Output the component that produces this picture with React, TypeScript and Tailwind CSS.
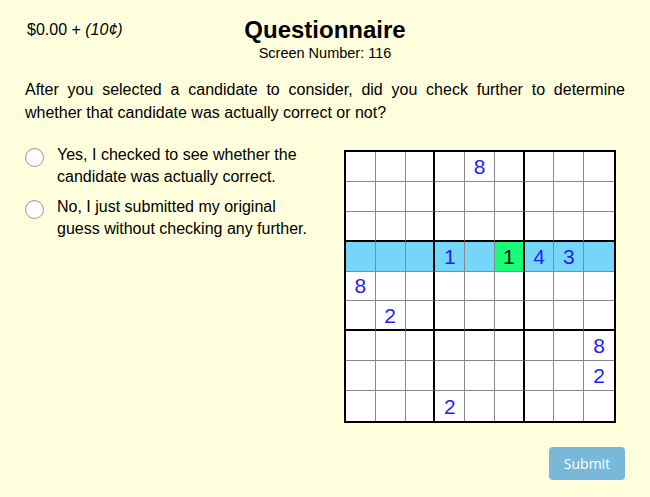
import React from "react";

const grid: (number | null)[][] = [
  [null, null, null, null, 8, null, null, null, null],
  [null, null, null, null, null, null, null, null, null],
  [null, null, null, null, null, null, null, null, null],
  [null, null, null, 1, null, 1, 4, 3, null],
  [8, null, null, null, null, null, null, null, null],
  [null, 2, null, null, null, null, null, null, null],
  [null, null, null, null, null, null, null, null, 8],
  [null, null, null, null, null, null, null, null, 2],
  [null, null, null, 2, null, null, null, null, null],
];

function Cell({ r, c, v }: { r: number; c: number; v: number | null }) {
  const highlight = r === 3;
  const selected = r === 3 && c === 5;
  const right = c === 2 || c === 5 ? "border-r-2 border-r-black" : c === 8 ? "" : "border-r border-r-[#888]";
  const bottom = r === 2 || r === 5 ? "border-b-2 border-b-black" : r === 8 ? "" : "border-b border-b-[#888]";
  const bg = selected ? "bg-[#17fd78]" : highlight ? "bg-[#76d6f9]" : "bg-white";
  return (
    <div
      className={`flex items-center justify-center text-[21px] leading-none ${right} ${bottom} ${bg} ${
        selected ? "text-black" : "text-[#1e1eff]"
      }`}
    >
      {v ?? ""}
    </div>
  );
}

function Radio({ children }: { children: React.ReactNode }) {
  return (
    <label className="flex items-start gap-[13px]">
      <span className="mt-[4px] w-[19px] h-[19px] shrink-0 rounded-full border border-[#9a9a9a] bg-white shadow-[inset_0_1px_1px_rgba(0,0,0,0.08)]" />
      <span className="text-[16px] leading-[22px] text-black">{children}</span>
    </label>
  );
}

export default function App() {
  return (
    <main
      className="w-[650px] h-[497px] bg-[#ffffdd] px-[25px] pt-[17px] text-black"
      style={{ fontFamily: '"Liberation Sans", Arial, sans-serif' }}
    >
      {/* Header */}
      <div className="grid grid-cols-[1fr_auto_1fr] items-start">
        <p className="text-[16px] leading-[22px] pt-[2px] pl-[2px]">
          $0.00 + <i>(10¢)</i>
        </p>
        <div className="flex flex-col items-center">
          <h1 className="text-[24px] font-bold leading-[26px]">Questionnaire</h1>
          <p className="text-[14.5px] leading-[18px] mt-[1px]">Screen Number: 116</p>
        </div>
        <div />
      </div>

      {/* Question */}
      <p className="mt-[16px] text-[16px] leading-[23px] text-justify">
        After you selected a candidate to consider, did you check further to determine whether that
        candidate was actually correct or not?
      </p>

      <div className="mt-[20px] flex">
        <div className="w-[290px] flex flex-col gap-[8px]">
          <Radio>
            Yes, I checked to see whether the
            <br />
            candidate was actually correct.
          </Radio>
          <Radio>
            No, I just submitted my original
            <br />
            guess without checking any further.
          </Radio>
        </div>

        {/* Sudoku grid */}
        <div className="ml-[29px] mt-[6px] grid grid-cols-[repeat(9,1fr)] grid-rows-[repeat(9,1fr)] w-[272px] h-[273px] shrink-0 border-2 border-black box-border bg-white">
          {grid.map((row, r) => row.map((v, c) => <Cell key={`${r}-${c}`} r={r} c={c} v={v} />))}
        </div>
      </div>

      <div className="mt-[24px] flex justify-end">
        <button
          className="w-[76px] h-[33px] rounded-[4px] bg-[#7ab8da] text-white text-[14px]"
          style={{ fontFamily: '"Open Sans", sans-serif' }}
        >
          Submit
        </button>
      </div>
    </main>
  );
}
